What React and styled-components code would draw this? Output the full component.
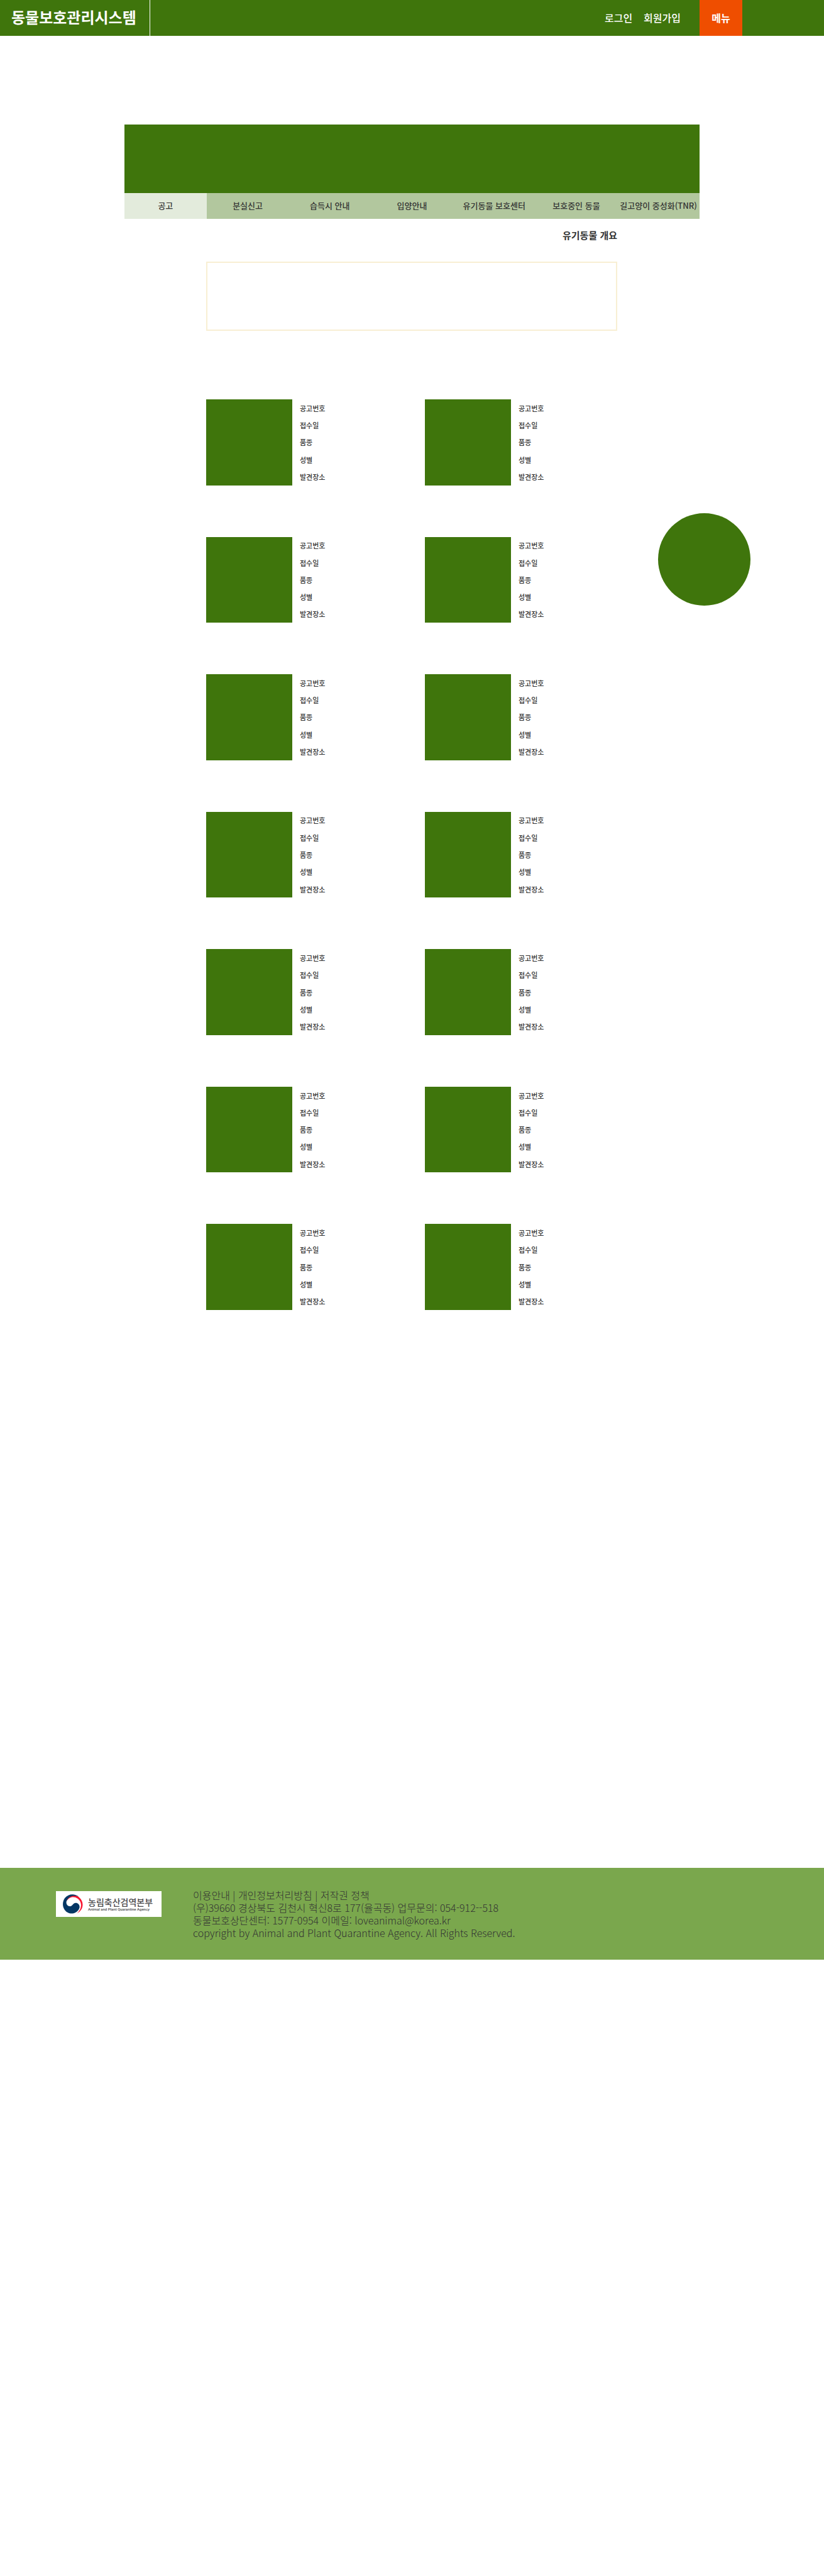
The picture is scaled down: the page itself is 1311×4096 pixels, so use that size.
import React from "react";
import styled, { createGlobalStyle } from "styled-components";

const GlobalStyle = createGlobalStyle`
  *, *::before, *::after { box-sizing: border-box; }
  body {
    margin: 0;
    background: #fff;
    color: #333;
    font-family: "Noto Sans CJK KR", "Noto Sans", sans-serif;
  }
  a { color: inherit; text-decoration: none; }
  ul, dl, dd, p, h1, h2 { margin: 0; padding: 0; list-style: none; }
`;

const green = "#3f750c";

const Page = styled.div`
  min-height: 4096px;
`;

const Header = styled.header`
  display: flex;
  height: 57px;
  padding-right: 130px;
  background: ${green};
  color: #fff;
`;

const Brand = styled.h1`
  display: flex;
  align-items: center;
  width: 239px;
  padding: 0 0 4px 18px;
  border-right: 1px solid #fff;
  font-size: 24px;
  font-weight: 700;
  white-space: nowrap;
`;

const AccountLinks = styled.nav`
  display: flex;
  align-items: center;
  gap: 18px;
  margin-left: auto;
  margin-right: 30px;
  padding-bottom: 2px;
  font-size: 16px;
  font-weight: 500;
`;

const MenuButton = styled.button`
  width: 68px;
  border: 0;
  padding: 0 0 2px;
  background: #ef4e00;
  color: #fff;
  font: inherit;
  font-size: 16px;
  font-weight: 700;
`;

const Hero = styled.section`
  margin: 141px 198px 0;
`;

const Banner = styled.div`
  height: 109px;
  background: ${green};
`;

const Tabs = styled.nav`
  display: grid;
  grid-template-columns: repeat(7, 1fr);
  height: 41px;
  background: #b2c79e;
`;

const Tab = styled.a`
  display: flex;
  align-items: center;
  justify-content: center;
  padding-bottom: 2px;
  background: ${(p) => (p.$active ? "#e3ebdc" : "transparent")};
  font-size: 13px;
  font-weight: 500;
  white-space: nowrap;
`;

const Body = styled.div`
  display: flex;
  align-items: flex-start;
  padding: 14px 117px 0 328px;
`;

const Main = styled.main`
  flex: 1;
`;

const PageTitle = styled.h2`
  font-size: 15px;
  font-weight: 700;
  line-height: 24px;
  text-align: right;
`;

const SummaryBox = styled.div`
  height: 110px;
  margin-top: 30px;
  border: 2px solid #f8efd3;
`;

const Notices = styled.ul`
  display: grid;
  grid-template-columns: 1fr 1fr;
  grid-template-rows: repeat(7, 1fr);
  column-gap: 42px;
  row-gap: 82px;
  min-height: 1448px;
  margin-top: 109px;
`;

const Notice = styled.li`
  display: flex;
  gap: 12px;
`;

const Photo = styled.div`
  width: 137px;
  background: ${green};
`;

const Fields = styled.dl`
  display: grid;
  grid-template-rows: repeat(5, 1fr);
  align-items: center;
  font-size: 11px;
  font-weight: 500;
  line-height: 14px;
`;

const QuickButton = styled.button`
  width: 147px;
  height: 147px;
  margin: 454px 0 0 65px;
  border: 0;
  border-radius: 50%;
  background: ${green};
`;

const Footer = styled.footer`
  display: flex;
  align-items: flex-start;
  gap: 50px;
  height: 146px;
  margin-top: 887px;
  padding: 37px 89px 0;
  background: #7aa74d;
`;

const Agency = styled.a`
  display: flex;
  align-items: center;
  gap: 8px;
  width: 168px;
  height: 41px;
  padding-left: 11px;
  background: #fff;
  color: #4a4a4c;
`;

const Emblem = styled.svg`
  width: 32px;
  height: 31px;
`;

const AgencyName = styled.span`
  display: block;
  font-size: 14px;
  font-weight: 500;
  line-height: 16px;
  white-space: nowrap;
`;

const AgencyEnglish = styled.span`
  display: block;
  font-family: Roboto, sans-serif;
  font-size: 6px;
  font-weight: 500;
  line-height: 8px;
  white-space: nowrap;
`;

const Legal = styled.div`
  margin-top: -4px;
  font-size: 16px;
  font-weight: 300;
  line-height: 20px;
`;

const tabs = [
  "공고",
  "분실신고",
  "습득시 안내",
  "입양안내",
  "유기동물 보호센터",
  "보호중인 동물",
  "길고양이 중성화(TNR)",
];
const fields = ["공고번호", "접수일", "품종", "성별", "발견장소"];
const notices = Array.from({ length: 14 }, (_, i) => i);

export default function App() {
  return (
    <Page lang="ko">
      <GlobalStyle />
      <Header>
        <Brand>동물보호관리시스템</Brand>
        <AccountLinks>
          <a href="#login">로그인</a>
          <a href="#join">회원가입</a>
        </AccountLinks>
        <MenuButton type="button">메뉴</MenuButton>
      </Header>
      <Hero>
        <Banner />
        <Tabs>
          {tabs.map((label, i) => (
            <Tab key={label} href={`#tab${i}`} $active={i === 0}>
              {label}
            </Tab>
          ))}
        </Tabs>
      </Hero>
      <Body>
        <Main>
          <PageTitle>유기동물 개요</PageTitle>
          <SummaryBox />
          <Notices>
            {notices.map((id) => (
              <Notice key={id}>
                <Photo />
                <Fields>
                  {fields.map((field) => (
                    <dt key={field}>{field}</dt>
                  ))}
                </Fields>
              </Notice>
            ))}
          </Notices>
        </Main>
        <QuickButton type="button" />
      </Body>
      <Footer>
        <Agency href="#agency">
          <Emblem viewBox="0 0 142 136" aria-hidden="true">
            <path d="M26 48C34 8 78 -6 112 18C154 50 148 112 98 135C134 106 140 56 106 30C76 10 44 18 26 48Z" fill="#f8152f" />
            <path d="M112 16C84 -6 40 -6 14 26C-10 60 -2 108 34 128C68 146 110 126 118 92C120 66 94 52 76 66C66 76 62 86 48 84C24 80 18 56 32 36C48 10 84 4 112 16Z" fill="#053764" />
          </Emblem>
          <span>
            <AgencyName>농림축산검역본부</AgencyName>
            <AgencyEnglish>Animal and Plant Quarantine Agency</AgencyEnglish>
          </span>
        </Agency>
        <Legal>
          <p>이용안내 | 개인정보처리방침 | 저작권 정책</p>
          <p>(우)39660 경상북도 김천시 혁신8로 177(율곡동) 업무문의: 054-912--518</p>
          <p>동물보호상단센터: 1577-0954 이메일: loveanimal@korea.kr</p>
          <p>copyright by Animal and Plant Quarantine Agency. All Rights Reserved.</p>
        </Legal>
      </Footer>
    </Page>
  );
}
